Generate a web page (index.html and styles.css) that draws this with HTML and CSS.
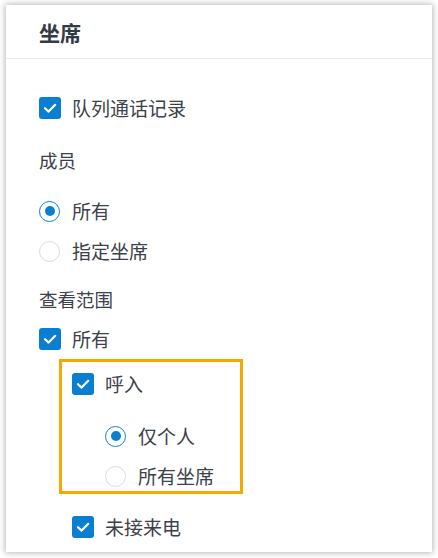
FILE: index.html
```html
<!DOCTYPE html>
<html lang="zh-CN">
<head>
<meta charset="utf-8">
<link rel="stylesheet" href="styles.css">
</head>
<body>
<div class="card">
  <div class="card-head">坐席</div>
  <div class="card-body">
    <div class="row r1">
      <span class="cb"><svg viewBox="0 0 22 22"><path d="M6 11.2 L9.6 14.6 L16.2 7.8" /></svg></span>
      <span class="txt">队列通话记录</span>
    </div>
    <div class="row label r2"><span class="txt">成员</span></div>
    <div class="row r3">
      <span class="rd on"></span><span class="txt">所有</span>
    </div>
    <div class="row r4">
      <span class="rd"></span><span class="txt">指定坐席</span>
    </div>
    <div class="row label r5"><span class="txt">查看范围</span></div>
    <div class="row r6">
      <span class="cb"><svg viewBox="0 0 22 22"><path d="M6 11.2 L9.6 14.6 L16.2 7.8" /></svg></span>
      <span class="txt">所有</span>
    </div>
    <div class="highlight">
      <div class="row">
        <span class="cb"><svg viewBox="0 0 22 22"><path d="M6 11.2 L9.6 14.6 L16.2 7.8" /></svg></span>
        <span class="txt">呼入</span>
      </div>
      <div class="row sub h2">
        <span class="rd on"></span><span class="txt">仅个人</span>
      </div>
      <div class="row sub h3">
        <span class="rd"></span><span class="txt">所有坐席</span>
      </div>
    </div>
    <div class="row r8">
      <span class="cb"><svg viewBox="0 0 22 22"><path d="M6 11.2 L9.6 14.6 L16.2 7.8" /></svg></span>
      <span class="txt">未接来电</span>
    </div>
  </div>
</div>
</body>
</html>
```
FILE: styles.css
```css
html, body {
  margin: 0;
  padding: 0;
  background: #ffffff;
}
body {
  padding: 5px 6px 6px 6px;
  font-family: "Noto Sans CJK SC", "Noto Sans", sans-serif;
  color: #3b4049;
}
.card {
  width: 426px;
  height: 547px;
  background: #fff;
  box-shadow: 0 0 6px 1px rgba(0, 0, 0, 0.28);
  overflow: hidden;
}
.card-head {
  height: 54px;
  box-sizing: border-box;
  padding-left: 33px;
  display: flex;
  align-items: center;
  font-size: 21px;
  font-weight: 700;
  color: #333a44;
  border-bottom: 1px solid #e9e9e9;
}
.card-body {
  padding-left: 33px;
  padding-top: 38px;
  display: flex;
  flex-direction: column;
  align-items: flex-start;
}
.row {
  height: 22px;
  display: flex;
  align-items: center;
  gap: 11px;
}
.txt {
  font-size: 19px;
  line-height: 22px;
  white-space: nowrap;
}
.label .txt { font-size: 18.5px; }
.r2 { margin-top: 30px; }
.r3 { margin-top: 29px; }
.r4 { margin-top: 18px; }
.r5 { margin-top: 26px; }
.r6 { margin-top: 18px; }
.cb {
  width: 22px;
  height: 22px;
  border-radius: 3px;
  background: #0a7fd2;
  flex: none;
  display: block;
}
.cb svg {
  display: block;
  width: 22px;
  height: 22px;
}
.cb path {
  fill: none;
  stroke: #fff;
  stroke-width: 2.2;
  stroke-linecap: round;
  stroke-linejoin: round;
}
.rd {
  width: 21px;
  height: 21px;
  box-sizing: border-box;
  border-radius: 50%;
  border: 1px solid #d9dbde;
  flex: none;
  margin-right: 1px;
  display: flex;
  align-items: center;
  justify-content: center;
  background: #fff;
}
.rd.on {
  border: 1.5px solid #0a7fd2;
}
.rd.on::after {
  content: "";
  width: 10px;
  height: 10px;
  border-radius: 50%;
  background: #0a7fd2;
}
.highlight {
  margin-top: 9px;
  margin-left: 20px;
  width: 184px;
  box-sizing: border-box;
  border: 3px solid #f5a800;
  padding: 11px 10px 4px 10px;
  display: flex;
  flex-direction: column;
  align-items: flex-start;
}
.sub { margin-left: 33px; }
.h2 { margin-top: 30px; }
.h3 { margin-top: 18px; }
.r8 {
  margin-top: 22px;
  margin-left: 33px;
}
```
